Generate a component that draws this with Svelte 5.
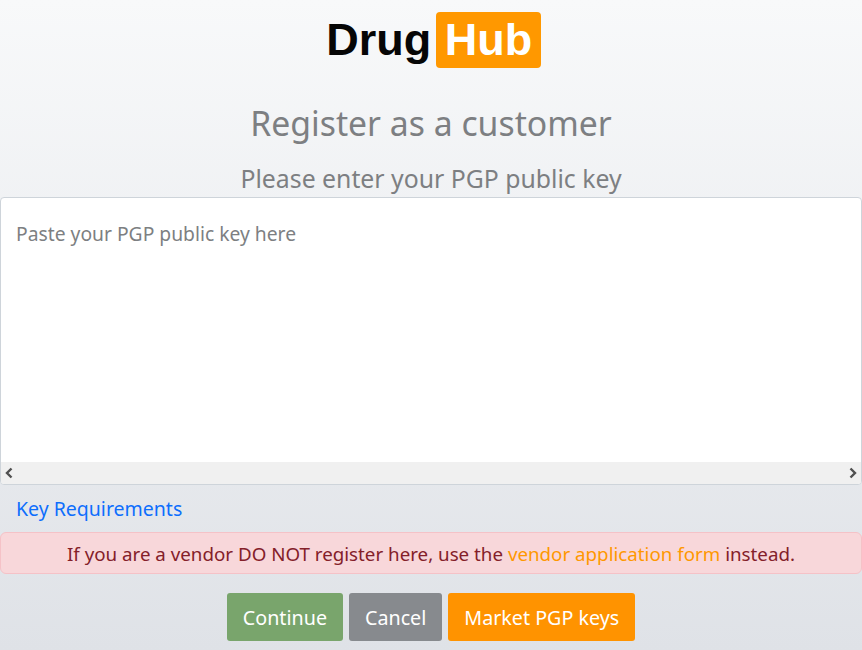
<script>
  let pgpKey = $state('');
</script>

<div class="page">
  <div class="logo">
    <span class="drug">Drug</span>
    <span class="hub">Hub</span>
  </div>

  <h2 class="title">Register as a customer</h2>
  <h4 class="subtitle">Please enter your PGP public key</h4>

  <div class="key-box">
    <textarea bind:value={pgpKey} placeholder="Paste your PGP public key here" wrap="off"></textarea>
    <div class="scrollbar">
      <svg width="12" height="12" viewBox="0 0 12 12"><path d="M8.5 1.5 L4 6 L8.5 10.5" fill="none" stroke="#505050" stroke-width="2.4"/></svg>
      <svg width="12" height="12" viewBox="0 0 12 12"><path d="M3.5 1.5 L8 6 L3.5 10.5" fill="none" stroke="#505050" stroke-width="2.4"/></svg>
    </div>
  </div>

  <a class="req" href="#requirements">Key Requirements</a>

  <div class="alert">
    If you are a vendor DO NOT register here, use the <a href="#vendor">vendor application form</a> instead.
  </div>

  <div class="actions">
    <button class="btn green">Continue</button>
    <button class="btn grey">Cancel</button>
    <button class="btn orange">Market PGP keys</button>
  </div>
</div>

<style>
  :global(body) {
    margin: 0;
    background: #e0e3e8;
  }

  .page {
    height: 650px;
    overflow: hidden;
    display: flex;
    flex-direction: column;
    background: linear-gradient(#f8f9fa, #dfe2e7);
    font-family: "Noto Sans", "Open Sans", sans-serif;
    font-size: 18.75px;
    color: #7d7f82;
  }

  .logo {
    display: flex;
    justify-content: center;
    align-items: center;
    gap: 5px;
    height: 56px;
    margin-top: 12px;
    padding-left: 5px;
    font-family: "Liberation Sans", Arial, sans-serif;
    font-weight: 700;
    font-size: 45px;
  }

  .drug {
    color: #060606;
  }

  .hub {
    display: flex;
    align-items: center;
    height: 56px;
    padding: 0 8.5px;
    background: #ff9800;
    border-radius: 4px;
    color: #fff;
  }

  .title {
    margin: 31px 0 0;
    height: 48px;
    line-height: 48px;
    text-align: center;
    font-size: 33.75px;
    font-weight: 400;
  }

  .subtitle {
    margin: 13px 0 0;
    height: 36px;
    line-height: 36px;
    text-align: center;
    font-size: 24.8px;
    font-weight: 400;
  }

  .key-box {
    margin-top: 1px;
    height: 288px;
    display: flex;
    flex-direction: column;
    box-sizing: border-box;
    border: 1px solid #ced4da;
    border-radius: 4px;
    background: #fff;
    overflow: hidden;
  }

  textarea {
    flex: 1;
    display: block;
    box-sizing: border-box;
    width: 100%;
    padding: 21px 15px 0;
    border: 0;
    outline: 0;
    resize: none;
    overflow: hidden;
    background: transparent;
    font: inherit;
    font-size: 19.3px;
    line-height: 29px;
    color: #212529;
  }

  textarea::placeholder {
    color: #7d7f82;
    opacity: 1;
  }

  .scrollbar {
    height: 22px;
    flex: none;
    display: flex;
    align-items: center;
    justify-content: space-between;
    padding: 0 2px;
    background: #f0f0f0;
  }

  .req {
    margin: 10px 0 0 16px;
    height: 27px;
    line-height: 27px;
    font-size: 19.5px;
    color: #0d6efd;
    text-decoration: none;
    align-self: flex-start;
  }

  .alert {
    margin-top: 10px;
    height: 42px;
    box-sizing: border-box;
    border: 1px solid #f5c2c7;
    border-radius: 6px;
    background: #f8d7da;
    color: #842029;
    text-align: center;
    line-height: 42px;
  }

  .alert a {
    color: #ff9800;
    text-decoration: none;
  }

  .actions {
    display: flex;
    justify-content: center;
    gap: 6px;
    margin-top: 19px;
  }

  .btn {
    height: 48px;
    padding: 0 16px;
    border: 0;
    border-radius: 3px;
    color: #fff;
    font: inherit;
    font-size: 19.7px;
  }

  .green {
    background: #79a56c;
  }

  .grey {
    background: #878a8e;
  }

  .orange {
    background: #ff9300;
  }
</style>
